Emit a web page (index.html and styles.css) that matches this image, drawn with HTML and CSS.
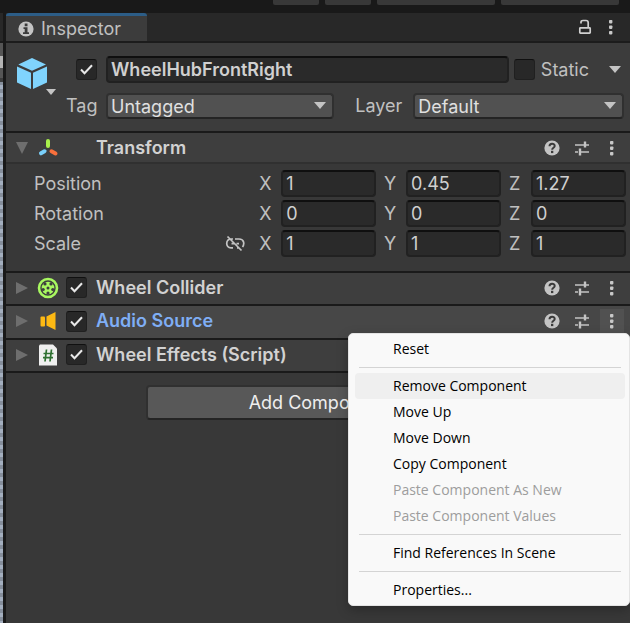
FILE: index.html
```html
<!DOCTYPE html>
<html lang="en">
<head>
<meta charset="utf-8">
<title>Inspector</title>
<link rel="stylesheet" href="styles.css">
</head>
<body>
<svg width="0" height="0" class="sprite" aria-hidden="true">
  <symbol id="help" viewBox="0 0 16 16"><circle cx="8" cy="8" r="7.6" fill="#c4c4c4"/><path d="M5.500 6.300C5.500 2.900 10.700 3 10.700 6c0 1.800-2.500 1.700-2.500 3.700" fill="none" stroke="#3a3a3a" stroke-width="2"/><rect x="7" y="10.800" width="2.300" height="2.300" fill="#3a3a3a"/></symbol>
  <symbol id="preset" viewBox="0 0 16 16"><path d="M1 5h9M12 5h3M1 12h3M7 12h8" stroke="#c4c4c4" stroke-width="1.500"/><path d="M11 1.500v6M6 8.500v7" stroke="#c4c4c4" stroke-width="2.400"/></symbol>
  <symbol id="dots" viewBox="0 0 16 16"><g fill="#c8c8c8"><rect x="6" y="1" width="3.400" height="3.400" rx=".8"/><rect x="6" y="6.500" width="3.400" height="3.400" rx=".8"/><rect x="6" y="12" width="3.400" height="3.400" rx=".8"/></g></symbol>
  <symbol id="right" viewBox="0 0 12 14"><path d="M0 1l12 6-12 6z" fill="#6e6e6e"/></symbol>
  <symbol id="down" viewBox="0 0 12 7"><path d="M0 0h12L6 7z" fill="#c4c4c4"/></symbol>
  <symbol id="tick" viewBox="0 0 21 21"><path d="M5 10.500l3.500 3.700 7.500-8" fill="none" stroke="#e8e8e8" stroke-width="2"/></symbol>
</svg>
<div class="toolbar"><span></span><span></span><span class="wide"></span><span class="wide"></span></div>
<div class="workspace">
  <div class="neighbor"></div>
  <main class="inspector">
    <header class="tabs">
      <button class="tab" type="button">
        <svg width="16" height="16" viewBox="0 0 16 16"><circle cx="8" cy="8" r="7.600" fill="#c4c4c4"/><path d="M6.700 2.500h2.800v2.700H6.700zM5.500 6.200h4v5H11V13H5v-1.800h1.700V8H5.500z" fill="#3c3c3c"/></svg>
        Inspector
      </button>
      <div class="tab-tools">
        <button class="tool" type="button" aria-label="Lock"><svg width="16" height="16" viewBox="0 0 16 16"><path d="M4 4.500V3.200Q4 1.500 6 1.500h3Q11.200 1.500 11.200 3.800V8" fill="none" stroke="#d0d0d0" stroke-width="1.700"/><rect x="2.800" y="8.800" width="10.400" height="5.400" rx=".6" fill="none" stroke="#d0d0d0" stroke-width="1.700"/></svg></button>
        <button class="tool" type="button" aria-label="Tab menu"><svg width="16" height="16"><use href="#dots"/></svg></button>
      </div>
    </header>

    <section class="object">
      <button class="cube" type="button" aria-label="Object icon">
        <svg width="40" height="38" viewBox="0 0 40 38"><g fill="#80d4fd"><path d="M15 0l14 6.600-14 6.200L1.300 6.600z"/><path d="M0 8.500l14 6.200V31L0 24.500z"/><path d="M16 14.700l14-6.200v16L16 31z"/></g><path d="M29 31h10l-5 6z" fill="#c4c4c4"/></svg>
      </button>
      <div class="object-fields">
        <div class="name-row">
          <span class="toggle"><input class="check" type="checkbox" checked aria-label="Active"><svg width="21" height="21"><use href="#tick"/></svg></span>
          <input class="field name" type="text" value="WheelHubFrontRight" aria-label="Name">
          <input class="check" type="checkbox" id="static"><label for="static">Static</label>
          <button class="static-menu" type="button" aria-label="Static flags"><svg width="12" height="7"><use href="#down"/></svg></button>
        </div>
        <div class="tag-row">
          <label class="tag-label" for="tag">Tag</label>
          <div class="select tag"><select id="tag"><option>Untagged</option></select><svg width="12" height="7"><use href="#down"/></svg></div>
          <label class="layer-label" for="layer">Layer</label>
          <div class="select layer"><select id="layer"><option>Default</option></select><svg width="12" height="7"><use href="#down"/></svg></div>
        </div>
      </div>
    </section>

    <section class="component">
      <div class="component-head transform-head">
        <svg class="fold" width="14" height="12" viewBox="0 0 14 12"><path d="M1 0h12L7 12z" fill="#6e6e6e"/></svg>
        <svg class="icon" width="22" height="22" viewBox="0 0 22 22"><g stroke-width="4" stroke-linecap="round"><path d="M11 4v5" stroke="#a8f04c"/><path d="M7.500 14.300L4 16.300" stroke="#7ad0fa"/><path d="M14.500 14.300l4 2.200" stroke="#f8703c"/></g></svg>
        <span class="check-space"></span>
        <h2>Transform</h2>
        <div class="tools">
          <button class="tool" type="button" aria-label="Help"><svg width="16" height="16"><use href="#help"/></svg></button>
          <button class="tool" type="button" aria-label="Presets"><svg width="16" height="16"><use href="#preset"/></svg></button>
          <button class="tool" type="button" aria-label="More"><svg width="16" height="16"><use href="#dots"/></svg></button>
        </div>
      </div>
      <div class="transform-body">
        <div class="vector"><span>Position</span>
          <label>X<input class="field" type="text" value="1"></label><label>Y<input class="field" type="text" value="0.45"></label><label>Z<input class="field" type="text" value="1.27"></label></div>
        <div class="vector"><span>Rotation</span>
          <label>X<input class="field" type="text" value="0"></label><label>Y<input class="field" type="text" value="0"></label><label>Z<input class="field" type="text" value="0"></label></div>
        <div class="vector"><span class="scale">Scale
          <button class="link" type="button" aria-label="Constrain proportions"><svg width="20" height="18" viewBox="0 0 20 18"><g fill="none" stroke="#c4c4c4" stroke-width="1.700"><path d="M8 4H6.500C.2 4 .2 12.900 6 12.900h2M10 4h4c5.500 0 5.500 5.500 3.500 8M12 12.900h1.500M6.500 8.700h2.500M11.500 8.700h2.500M2.500 1.500l14 14"/></g></svg></button></span>
          <label>X<input class="field" type="text" value="1"></label><label>Y<input class="field" type="text" value="1"></label><label>Z<input class="field" type="text" value="1"></label></div>
      </div>
    </section>

    <section class="component">
      <div class="component-head">
        <svg class="fold" width="14" height="14"><use href="#right"/></svg>
        <svg class="icon" width="22" height="22" viewBox="0 0 22 22"><circle cx="11" cy="11" r="9" fill="none" stroke="#a8f860" stroke-width="2.600"/><circle cx="11" cy="11" r="6.300" fill="#a8f860"/><g fill="#3e3e3e"><circle cx="11" cy="11" r="1.500"/><circle cx="14" cy="6.900" r="1.600"/><circle cx="15.800" cy="12.500" r="1.600"/><circle cx="11" cy="16" r="1.600"/><circle cx="6.200" cy="12.500" r="1.600"/><circle cx="8" cy="6.900" r="1.600"/></g></svg>
        <span class="toggle"><input class="check" type="checkbox" checked aria-label="Enable Wheel Collider"><svg width="21" height="21"><use href="#tick"/></svg></span>
        <h2>Wheel Collider</h2>
        <div class="tools">
          <button class="tool" type="button" aria-label="Help"><svg width="16" height="16"><use href="#help"/></svg></button>
          <button class="tool" type="button" aria-label="Presets"><svg width="16" height="16"><use href="#preset"/></svg></button>
          <button class="tool" type="button" aria-label="More"><svg width="16" height="16"><use href="#dots"/></svg></button>
        </div>
      </div>
    </section>

    <section class="component active">
      <div class="component-head">
        <svg class="fold" width="14" height="14"><use href="#right"/></svg>
        <svg class="icon" width="22" height="22" viewBox="0 0 22 22"><rect x="3.500" y="6.500" width="4.500" height="10" rx="1" fill="#fdb913"/><path d="M9.500 6.500L18.500 2v18l-9-4.500z" fill="#fdb913"/></svg>
        <span class="toggle"><input class="check" type="checkbox" checked aria-label="Enable Audio Source"><svg width="21" height="21"><use href="#tick"/></svg></span>
        <h2>Audio Source</h2>
        <div class="tools">
          <button class="tool" type="button" aria-label="Help"><svg width="16" height="16"><use href="#help"/></svg></button>
          <button class="tool" type="button" aria-label="Presets"><svg width="16" height="16"><use href="#preset"/></svg></button>
          <button class="tool open" type="button" aria-label="More"><svg width="16" height="16"><use href="#dots"/></svg></button>
        </div>
      </div>
      <div class="menu" role="menu">
        <button type="button" role="menuitem">Reset</button>
        <hr>
        <button type="button" role="menuitem" class="hover">Remove Component</button>
        <button type="button" role="menuitem">Move Up</button>
        <button type="button" role="menuitem">Move Down</button>
        <button type="button" role="menuitem">Copy Component</button>
        <button type="button" role="menuitem" disabled>Paste Component As New</button>
        <button type="button" role="menuitem" disabled>Paste Component Values</button>
        <hr>
        <button type="button" role="menuitem">Find References In Scene</button>
        <hr>
        <button type="button" role="menuitem">Properties...</button>
      </div>
    </section>

    <section class="component">
      <div class="component-head">
        <svg class="fold" width="14" height="14"><use href="#right"/></svg>
        <svg class="icon" width="22" height="22" viewBox="0 0 22 22"><path d="M3 .5h13l4 4v17H2v-20z" fill="#f0f0f0"/><path d="M9.500 5.500l-1.500 12M14.500 5.500l-1.500 12M6.500 9.500h10M6 13.700h10" stroke="#2e7031" stroke-width="1.700"/></svg>
        <span class="toggle"><input class="check" type="checkbox" checked aria-label="Enable Wheel Effects"><svg width="21" height="21"><use href="#tick"/></svg></span>
        <h2>Wheel Effects (Script)</h2>
      </div>
    </section>

    <div class="footer"><button class="add" type="button">Add Component</button></div>
  </main>
</div>
</body>
</html>
```
FILE: styles.css
```css
* { box-sizing: border-box; }

body {
  margin: 0;
  min-height: 100vh;
  display: flex;
  flex-direction: column;
  overflow: hidden;
  background: #191919;
  color: #c0c0c0;
  font: 18px/24px Inter, sans-serif;
}

button, input, select { font: inherit; color: inherit; margin: 0; }
button { border: 0; padding: 0; background: none; }
svg { display: block; flex: none; }
.sprite { position: absolute; }

.toolbar {
  display: flex;
  justify-content: flex-end;
  gap: 6px;
  height: 13px;
  padding-right: 11px;
}
.toolbar span { width: 46px; height: 5px; background: #383838; border-radius: 0 0 2px 2px; }
.toolbar .wide { width: 118px; }

.workspace { flex: 1; display: flex; }
.neighbor {
  width: 3px;
  margin-right: 3px;
  background:
    linear-gradient(#282828 0 28px, #1c1c1c 28px 30px, #555 30px 43px, #b4b4b4 43px 55px, #555 55px 65px, #3c3c3c 65px 69px, transparent 69px),
    repeating-linear-gradient(#a3aebe 0 4px, #858e9b 4px 8px);
}
.inspector { flex: 1; min-width: 0; background: #383838; }

.tabs {
  display: flex;
  justify-content: space-between;
  height: 30px;
  background: #282828;
  border-bottom: 2px solid #1c1c1c;
}
.tab {
  display: flex;
  align-items: center;
  gap: 7px;
  padding: 0 26px 0 12px;
  background: #3c3c3c;
  border-top: 3px solid #2c5d87;
  border-radius: 3px 3px 0 0;
}
.tab-tools { display: flex; align-items: center; gap: 2px; padding-right: 7px; }
.tool { display: flex; align-items: center; justify-content: center; width: 24px; height: 24px; }
.open { background: #515151; }

.object {
  display: flex;
  gap: 9px;
  padding: 13px 6px 12px 11px;
  background: #3c3c3c;
  border-bottom: 2px solid #1a1a1a;
}
.cube { align-self: flex-start; padding-top: 2px; }
.object-fields { flex: 1; min-width: 0; display: flex; flex-direction: column; gap: 10px; }
.name-row { display: flex; align-items: center; padding-left: 10px; }
.name-row label { margin-left: 6px; }
.static-menu { margin-left: auto; padding: 0 3px 0 20px; }

.toggle { position: relative; flex: none; width: 21px; height: 21px; }
.toggle svg { position: absolute; inset: 0; display: none; pointer-events: none; }
.check:checked + svg { display: block; }
.check {
  appearance: none;
  display: block;
  flex: none;
  width: 21px;
  height: 21px;
  background: #282828;
  border: 1px solid #202020;
  border-top-color: #101010;
  border-radius: 3px;
}

.field {
  flex: 1;
  min-width: 0;
  height: 27px;
  padding: 0 3px;
  background: #2a2a2a;
  border: 2px solid #212121;
  border-top-color: #0f0f0f;
  border-radius: 4px;
  color: #d0d0d0;
}
.name { margin: 0 5px 0 9px; font-weight: 600; }

.tag-row { display: flex; align-items: center; }
.tag-label { width: 40px; }
.select { position: relative; height: 26px; }
.select select {
  appearance: none;
  width: 100%;
  height: 26px;
  padding: 0 24px 0 3px;
  background: #515151;
  border: 2px solid #303030;
  border-bottom-color: #242424;
  border-radius: 4px;
  color: #e0e0e0;
}
.select svg { position: absolute; right: 8px; top: 9px; pointer-events: none; }
.tag { flex: 13; }
.layer { flex: 12; }
.layer-label { width: 58px; margin-left: 21px; }

.component { position: relative; border-bottom: 2px solid #1a1a1a; }
.component-head {
  display: flex;
  align-items: center;
  height: 31px;
  padding: 0 6px 2px 9px;
  background: #3e3e3e;
}
.active .component-head { height: 32px; background: #474747; }
.transform-head { padding-bottom: 0; border-bottom: 2px solid #303030; }
.fold { margin-right: 8px; }
.icon { margin-right: 7px; }
.check-space { width: 21px; }
h2 { margin: 0 0 0 9px; font-size: 18px; font-weight: 600; color: #d2d2d2; }
.active h2 { color: #7faef5; }
.tools { display: flex; gap: 6px; margin-left: auto; }

.transform-body { display: grid; gap: 3px; padding: 6px 4px 14px 28px; }
.vector {
  display: grid;
  grid-template-columns: 13fr 7fr 7fr 7fr;
  gap: 8px;
  align-items: center;
}
.vector label { display: grid; grid-template-columns: 22px 1fr; align-items: center; }
.scale { display: flex; justify-content: space-between; padding-right: 6px; }
.link { display: flex; align-items: center; }

.footer { display: flex; justify-content: center; padding-top: 12px; }
.add {
  width: 55%;
  height: 35px;
  background: #585858;
  border: 2px solid #303030;
  border-bottom-color: #242424;
  border-radius: 4px;
  color: #eee;
}

.menu {
  position: absolute;
  z-index: 2;
  top: 27px;
  right: 0;
  width: 282px;
  padding: 2px 4px 2px 6px;
  background: #f9f9f9;
  border: 1px solid #e4e4e4;
  border-radius: 5px;
  box-shadow: 0 4px 12px rgb(0 0 0 / 25%);
  color: #000;
  font: 14px/26px "Open Sans", sans-serif;
}
.menu button {
  display: block;
  width: 100%;
  height: 26px;
  padding-left: 38px;
  border-radius: 4px;
  text-align: left;
}
.menu .hover { background: #efefef; }
.menu button:disabled { color: #9d9d9d; }
.menu hr { height: 1px; margin: 5px 4px; border: 0; background: #d4d4d4; }
```
